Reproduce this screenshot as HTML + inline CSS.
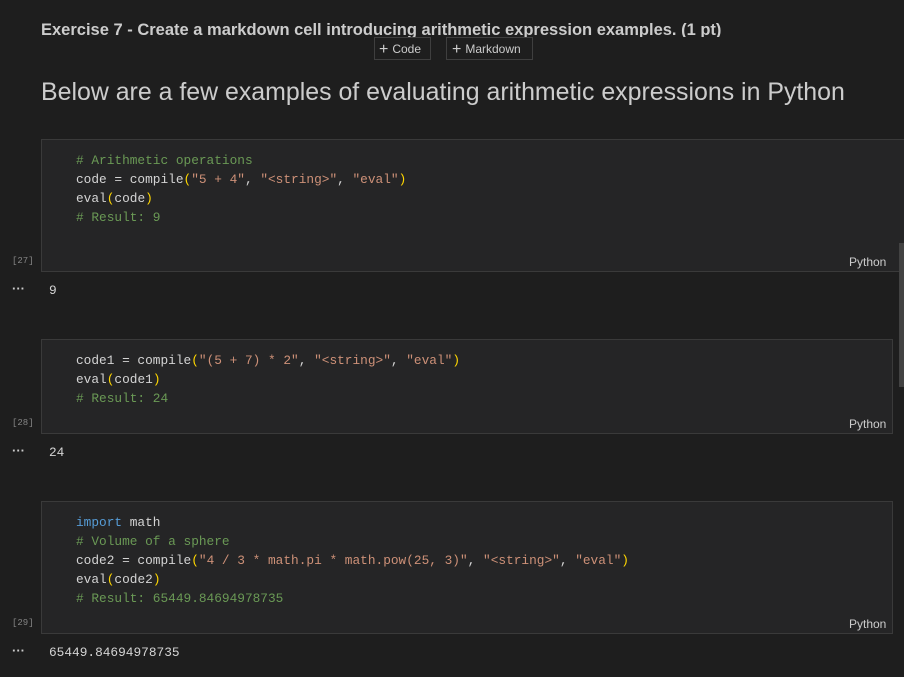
<!DOCTYPE html>
<html><head><style>
body{margin:0;width:904px;height:677px;background:#1e1e1e;overflow:hidden;position:relative;font-family:"Liberation Sans",sans-serif}
.a{position:absolute}
.title{left:41px;top:18px;height:19px;overflow:hidden;font-weight:bold;font-size:16.5px;color:#cccccc;white-space:nowrap;line-height:25px}
.btn{top:37px;height:21px;border:1px solid #3f3f3f;color:#cccccc;font-size:12px;line-height:21px;box-sizing:content-box}
.btn span{color:#cccccc;font-size:16px;font-weight:300;margin-right:4px;position:relative;top:1px}
.h{left:41px;top:78px;font-size:24.9px;color:#cccccc;white-space:nowrap}
.cell{background:#252526;border:1px solid #3a3a3a;box-sizing:border-box}
.code{font-family:"Liberation Mono",monospace;font-size:12.8px;line-height:19px;color:#d4d4d4;white-space:pre;left:76px}
.c{color:#6a9955}.s{color:#ce9178}.p{color:#ffd700}.k{color:#569cd6}
.py{font-size:12px;color:#cccccc}
.n{font-family:"Liberation Mono",monospace;font-size:9px;color:#858585;left:12px}
.out{font-family:"Liberation Mono",monospace;font-size:12.8px;color:#d4d4d4;left:49px}
.dots{left:12px;color:#ccc;font-size:13px;font-weight:bold;letter-spacing:0px}
</style></head><body>
<div class="a title">Exercise 7 - Create a markdown cell introducing arithmetic expression examples. (1 pt)</div>
<div class="a btn" style="left:374px;width:51px;padding-left:4px"><span>+</span>Code</div>
<div class="a btn" style="left:446px;width:80px;padding-left:5px"><span>+</span>Markdown</div>
<div class="a h">Below are a few examples of evaluating arithmetic expressions in Python</div>

<div class="a cell" style="left:41px;top:139px;width:880px;height:133px"></div>
<div class="a code" style="top:151px"><span class="c"># Arithmetic operations</span>
code = compile<span class="p">(</span><span class="s">"5 + 4"</span>, <span class="s">"&lt;string&gt;"</span>, <span class="s">"eval"</span><span class="p">)</span>
eval<span class="p">(</span>code<span class="p">)</span>
<span class="c"># Result: 9</span></div>
<div class="a n" style="top:256px">[27]</div>
<div class="a py" style="left:849px;top:255px">Python</div>
<div class="a dots" style="top:281px">···</div>
<div class="a out" style="top:283px">9</div>

<div class="a cell" style="left:41px;top:339px;width:852px;height:95px"></div>
<div class="a code" style="top:351px">code1 = compile<span class="p">(</span><span class="s">"(5 + 7) * 2"</span>, <span class="s">"&lt;string&gt;"</span>, <span class="s">"eval"</span><span class="p">)</span>
eval<span class="p">(</span>code1<span class="p">)</span>
<span class="c"># Result: 24</span></div>
<div class="a n" style="top:418px">[28]</div>
<div class="a py" style="left:849px;top:417px">Python</div>
<div class="a dots" style="top:443px">···</div>
<div class="a out" style="top:445px">24</div>

<div class="a cell" style="left:41px;top:501px;width:852px;height:133px"></div>
<div class="a code" style="top:513px"><span class="k">import</span> math
<span class="c"># Volume of a sphere</span>
code2 = compile<span class="p">(</span><span class="s">"4 / 3 * math.pi * math.pow(25, 3)"</span>, <span class="s">"&lt;string&gt;"</span>, <span class="s">"eval"</span><span class="p">)</span>
eval<span class="p">(</span>code2<span class="p">)</span>
<span class="c"># Result: 65449.84694978735</span></div>
<div class="a n" style="top:618px">[29]</div>
<div class="a py" style="left:849px;top:617px">Python</div>
<div class="a dots" style="top:643px">···</div>
<div class="a out" style="top:645px">65449.84694978735</div>

<div class="a" style="left:899px;top:243px;width:5px;height:144px;background:#424242"></div>
</body></html>
